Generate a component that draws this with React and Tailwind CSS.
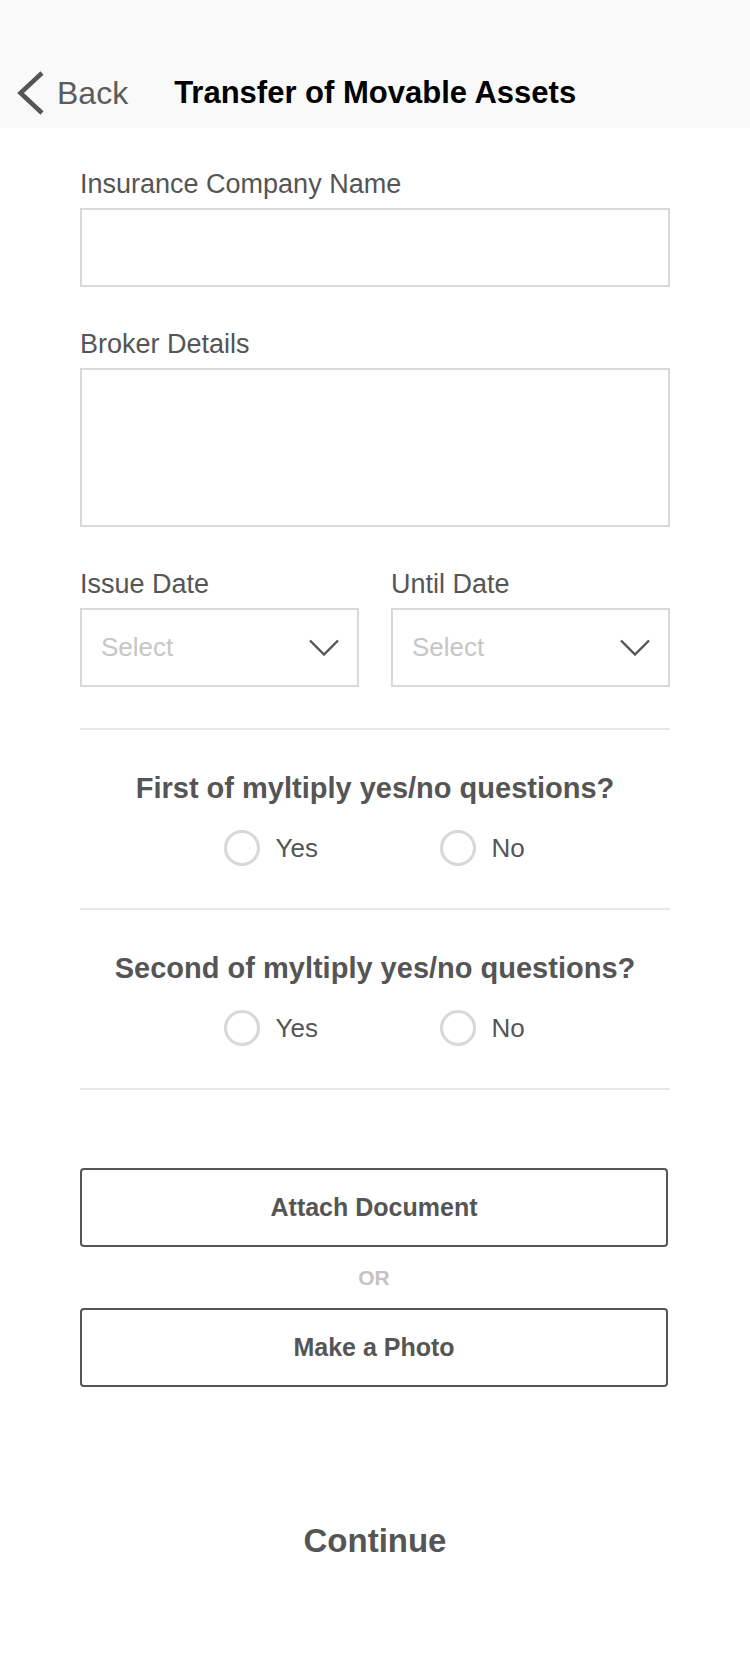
import React from "react";

const font = { fontFamily: '"Liberation Sans", Arial, Helvetica, sans-serif' };

function Label({ children }) {
  return <div className="text-[27px] leading-[30px] text-[#555555] mb-[9px]">{children}</div>;
}

function Chevron() {
  return (
    <svg width="30" height="17" viewBox="0 0 30 17" fill="none">
      <polyline points="1,1.5 15,15.5 29,1.5" stroke="#555555" strokeWidth="2.4" />
    </svg>
  );
}

function SelectBox() {
  return (
    <div className="h-[79px] border-2 border-[#d9d9d9] flex items-center justify-between pl-[19px] pr-[18px]">
      <span className="text-[26px] text-[#c6c6c6]">Select</span>
      <Chevron />
    </div>
  );
}

function Radio({ label, className }) {
  return (
    <div className={"flex items-center " + className}>
      <span className="w-[36px] h-[36px] rounded-full border-[3px] border-[#d8d8d8] shrink-0" />
      <span className="ml-[16px] text-[26px] leading-[30px] text-[#555555]">{label}</span>
    </div>
  );
}

function Question({ text }) {
  return (
    <div>
      <div className="mt-[41px] text-center text-[29px] leading-[34px] font-bold text-[#555555]">{text}</div>
      <div className="mt-[25px] flex justify-center h-[36px]">
        <Radio label="Yes" className="w-[216px]" />
        <Radio label="No" className="w-[87px]" />
      </div>
      <div className="mt-[42px] h-[2px] bg-[#e8e8e8]" />
    </div>
  );
}

export default function App() {
  return (
    <div className="min-h-[1680px] w-[750px] bg-white" style={font}>
      <header className="h-[128px] bg-[#f9f9f9] flex items-center pt-[58px]">
        <svg width="30" height="44" viewBox="0 0 30 44" className="ml-[16px]" fill="none">
          <polyline points="26,2 4.5,22 26,42" stroke="#555555" strokeWidth="4.5" />
        </svg>
        <span className="ml-[11px] text-[32px] leading-[38px] text-[#5c5c5c]">Back</span>
        <span className="ml-[46px] text-[31px] leading-[38px] font-bold text-black">Transfer of Movable Assets</span>
      </header>

      <main className="px-[80px] pt-[41px]">
        <Label>Insurance Company Name</Label>
        <input className="block w-full h-[79px] border-2 border-[#d9d9d9] outline-none" />

        <div className="mt-[42px]">
          <Label>Broker Details</Label>
          <textarea className="block w-full h-[159px] border-2 border-[#d9d9d9] outline-none resize-none" />
        </div>

        <div className="mt-[42px] grid grid-cols-2 gap-[32px]">
          <div>
            <Label>Issue Date</Label>
            <SelectBox />
          </div>
          <div>
            <Label>Until Date</Label>
            <SelectBox />
          </div>
        </div>

        <div className="mt-[41px] h-[2px] bg-[#e8e8e8]" />

        <Question text="First of myltiply yes/no questions?" />
        <Question text="Second of myltiply yes/no questions?" />

        <button className="mt-[78px] w-[588px] h-[79px] border-2 border-[#555555] rounded-[4px] flex items-center justify-center text-[25px] font-bold text-[#555555]">
          Attach Document
        </button>
        <div className="mt-[19px] w-[588px] text-center text-[21px] leading-[24px] font-bold text-[#c4c4c4]">OR</div>
        <button className="mt-[18px] w-[588px] h-[79px] border-2 border-[#555555] rounded-[4px] flex items-center justify-center text-[25px] font-bold text-[#555555]">
          Make a Photo
        </button>
      </main>

      <div className="mt-[135px] text-center text-[33px] leading-[38px] font-bold text-[#555555]">Continue</div>
    </div>
  );
}
